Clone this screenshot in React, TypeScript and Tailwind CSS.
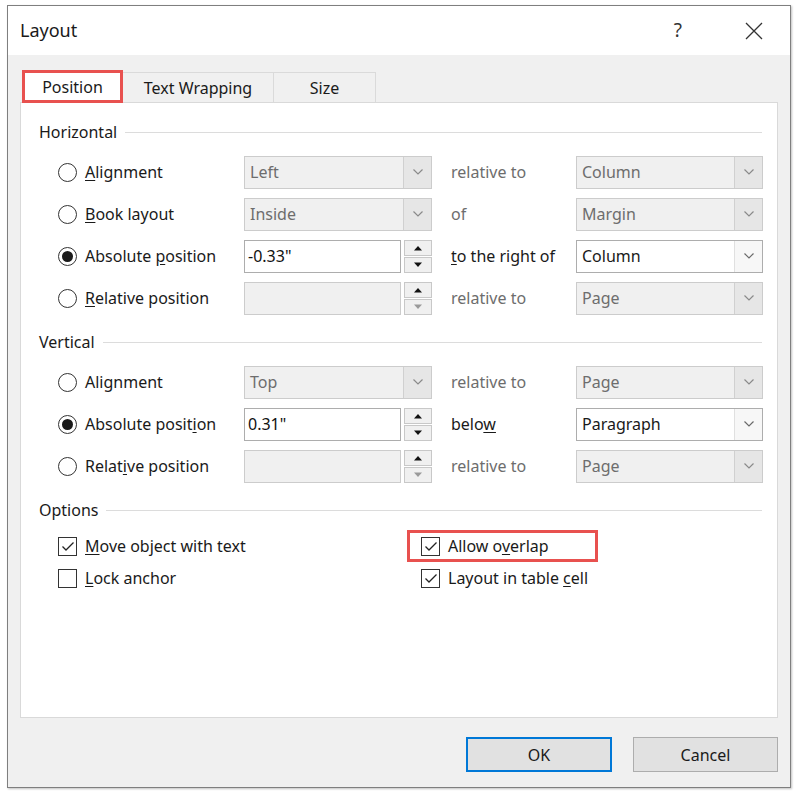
import React from "react";

const font = { fontFamily: '"Segoe UI", "Noto Sans", "Open Sans", sans-serif' };

// label with one underlined mnemonic letter
const Mn = ({ text, at }: { text: string; at?: number }) => {
  if (at === undefined) return <>{text}</>;
  return (
    <>
      {text.slice(0, at)}
      <span className="underline underline-offset-2">{text[at]}</span>
      {text.slice(at + 1)}
    </>
  );
};

const Radio = ({ checked }: { checked?: boolean }) => (
  <div className="w-[19px] h-[19px] rounded-full border border-[#333] bg-white flex items-center justify-center shrink-0">
    {checked && <div className="w-[11px] h-[11px] rounded-full bg-[#1a1a1a]" />}
  </div>
);

const Chevron = ({ dim }: { dim?: boolean }) => (
  <svg width="12" height="8" viewBox="0 0 12 8">
    <path d="M1.5 1.5 L6 6 L10.5 1.5" fill="none" stroke={dim ? "#8a8a8a" : "#6a6a6a"} strokeWidth="1.2" />
  </svg>
);

const Select = ({ value, disabled, w }: { value: string; disabled?: boolean; w: string }) => (
  <div
    className={`${w} h-[33px] flex border ${
      disabled ? "bg-[#f0f0f0] border-[#cccccc] text-[#6d6d6d]" : "bg-white border-[#adadad] text-[#1a1a1a]"
    }`}
  >
    <div className="flex-1 flex items-center pl-[5px] text-[16px]">{value}</div>
    <div
      className={`w-[28px] flex items-center justify-center border-l ${
        disabled ? "bg-[#e6e6e6] border-[#d0d0d0]" : "bg-[#f7f7f7] border-[#e0e0e0]"
      }`}
    >
      <Chevron dim={disabled} />
    </div>
  </div>
);

const Tri = ({ up, dim }: { up?: boolean; dim?: boolean }) => (
  <svg width="10" height="6" viewBox="0 0 10 6">
    <path d={up ? "M1 5.5 L5 1 L9 5.5 Z" : "M1 0.5 L5 5 L9 0.5 Z"} fill={dim ? "#9a9a9a" : "#111"} />
  </svg>
);

const Spinner = ({ value, disabled }: { value: string; disabled?: boolean }) => (
  <div className="w-[188px] h-[33px] flex gap-[3px]">
    <div
      className={`flex-1 flex items-center pl-[3px] text-[16px] border ${
        disabled ? "bg-[#f0f0f0] border-[#cccccc]" : "bg-white border-[#adadad] text-[#111]"
      }`}
    >
      {value}
    </div>
    <div className="w-[28px] flex flex-col gap-[1px]">
      <div className="flex-1 flex items-center justify-center bg-[#f0f0f0] border border-[#c8c8c8]">
        <Tri up />
      </div>
      <div className="flex-1 flex items-center justify-center bg-[#f0f0f0] border border-[#c8c8c8]">
        <Tri dim={disabled} />
      </div>
    </div>
  </div>
);

const Header = ({ title, className }: { title: string; className: string }) => (
  <div className={`flex items-center h-[24px] pl-[18px] pr-[15px] ${className}`}>
    <span className="text-[16px] text-[#1a1a1a] mr-[8px]">{title}</span>
    <div className="flex-1 h-px bg-[#dcdcdc]" />
  </div>
);

type RowProps = {
  label: string;
  at?: number;
  checked?: boolean;
  ctl: React.ReactNode;
  mid: string;
  midAt?: number;
  midDark?: boolean;
  sel: string;
  selDisabled?: boolean;
};

const Row = ({ label, at, checked, ctl, mid, midAt, midDark, sel, selDisabled }: RowProps) => (
  <div className="h-[42px] flex items-center pl-[37px]">
    <Radio checked={checked} />
    <div className="w-[159px] ml-[8px] text-[16px] text-[#1a1a1a]">
      <Mn text={label} at={at} />
    </div>
    {ctl}
    <div className={`w-[125px] ml-[19px] text-[16px] ${midDark ? "text-[#1a1a1a]" : "text-[#6d6d6d]"}`}>
      <Mn text={mid} at={midAt} />
    </div>
    <Select value={sel} disabled={selDisabled} w="w-[187px]" />
  </div>
);

const Check = ({ checked }: { checked?: boolean }) => (
  <div className="w-[19px] h-[19px] border border-[#333] bg-white flex items-center justify-center shrink-0">
    {checked && (
      <svg width="14" height="11" viewBox="0 0 14 11">
        <path d="M1.5 5.5 L5 9 L12.5 1.5" fill="none" stroke="#222" strokeWidth="1.3" />
      </svg>
    )}
  </div>
);

const CheckItem = ({ label, at, checked }: { label: string; at: number; checked?: boolean }) => (
  <div className="flex items-center h-[32px]">
    <Check checked={checked} />
    <span className="ml-[8px] text-[16px] text-[#1a1a1a]">
      <Mn text={label} at={at} />
    </span>
  </div>
);

export default function App() {
  return (
    <div className="w-[800px] h-[792px] bg-white pt-[5px] pl-[7px]" style={font}>
      <div className="w-[784px] h-[783px] border border-[#7f7f7f] bg-[#f0f0f0] flex flex-col shadow-[1px_1px_2px_rgba(0,0,0,0.25)]">
        {/* title bar */}
        <div className="h-[49px] bg-white flex items-center pl-[12px] pr-[27px]">
          <span className="text-[18px] text-[#1a1a1a]">Layout</span>
          <span className="ml-auto text-[19px] text-[#333] mr-[63px]">?</span>
          <svg width="18" height="18" viewBox="0 0 18 18">
            <path d="M1 1 L17 17 M17 1 L1 17" stroke="#333" strokeWidth="1.3" />
          </svg>
        </div>

        <div className="flex-1 flex flex-col pl-[12px] pr-[12px] pt-[15px]">
          {/* tabs */}
          <div className="flex h-[33px] pl-[2px]">
            <div className="w-[101px] bg-white border-[3px] border-[#e8514f] flex items-center justify-center text-[16px] text-[#1a1a1a] relative z-10">
              Position
            </div>
            <div className="w-[151px] border border-l-0 border-[#dadada] bg-[#f0f0f0] flex items-center justify-center text-[16px] text-[#1a1a1a] mt-[2px]">
              Text Wrapping
            </div>
            <div className="w-[102px] border border-l-0 border-[#dadada] bg-[#f0f0f0] flex items-center justify-center text-[16px] text-[#1a1a1a] mt-[2px]">
              Size
            </div>
          </div>

          {/* panel */}
          <div className="h-[616px] -mt-px bg-white border border-[#d9d9d9]">
            <Header title="Horizontal" className="mt-[17px]" />
            <div className="mt-[7px]">
              <Row
                label="Alignment"
                at={0}
                ctl={<Select value="Left" disabled w="w-[188px]" />}
                mid="relative to"
                sel="Column"
                selDisabled
              />
              <Row
                label="Book layout"
                at={0}
                ctl={<Select value="Inside" disabled w="w-[188px]" />}
                mid="of"
                sel="Margin"
                selDisabled
              />
              <Row
                label="Absolute position"
                at={9}
                checked
                ctl={<Spinner value={'-0.33"'} />}
                mid="to the right of"
                midAt={0}
                midDark
                sel="Column"
              />
              <Row
                label="Relative position"
                at={0}
                ctl={<Spinner value="" disabled />}
                mid="relative to"
                sel="Page"
                selDisabled
              />
            </div>

            <Header title="Vertical" className="mt-[11px]" />
            <div className="mt-[7px]">
              <Row
                label="Alignment"
                ctl={<Select value="Top" disabled w="w-[188px]" />}
                mid="relative to"
                sel="Page"
                selDisabled
              />
              <Row
                label="Absolute position"
                at={14}
                checked
                ctl={<Spinner value={'0.31"'} />}
                mid="below"
                midAt={4}
                midDark
                sel="Paragraph"
              />
              <Row
                label="Relative position"
                at={5}
                ctl={<Spinner value="" disabled />}
                mid="relative to"
                sel="Page"
                selDisabled
              />
            </div>

            <Header title="Options" className="mt-[11px]" />
            <div className="mt-[8px] flex pl-[37px]">
              <div className="w-[349px]">
                <CheckItem label="Move object with text" at={0} checked />
                <CheckItem label="Lock anchor" at={0} />
              </div>
              <div>
                <div className="border-[3px] border-[#e8514f] w-[191px] h-[32px] pl-[11px] flex items-center">
                  <Check checked />
                  <span className="ml-[8px] text-[16px] text-[#1a1a1a]">
                    <Mn text="Allow overlap" at={7} />
                  </span>
                </div>
                <div className="pl-[14px]">
                  <CheckItem label="Layout in table cell" at={16} checked />
                </div>
              </div>
            </div>
          </div>

          {/* buttons */}
          <div className="flex justify-end gap-[21px] mt-[19px] pr-[0px]">
            <button className="w-[146px] h-[35px] bg-[#e1e1e1] border-2 border-[#0078d7] text-[16px] text-[#1a1a1a]">
              OK
            </button>
            <button className="w-[145px] h-[35px] bg-[#e1e1e1] border border-[#adadad] text-[16px] text-[#1a1a1a]">
              Cancel
            </button>
          </div>
        </div>
      </div>
    </div>
  );
}
